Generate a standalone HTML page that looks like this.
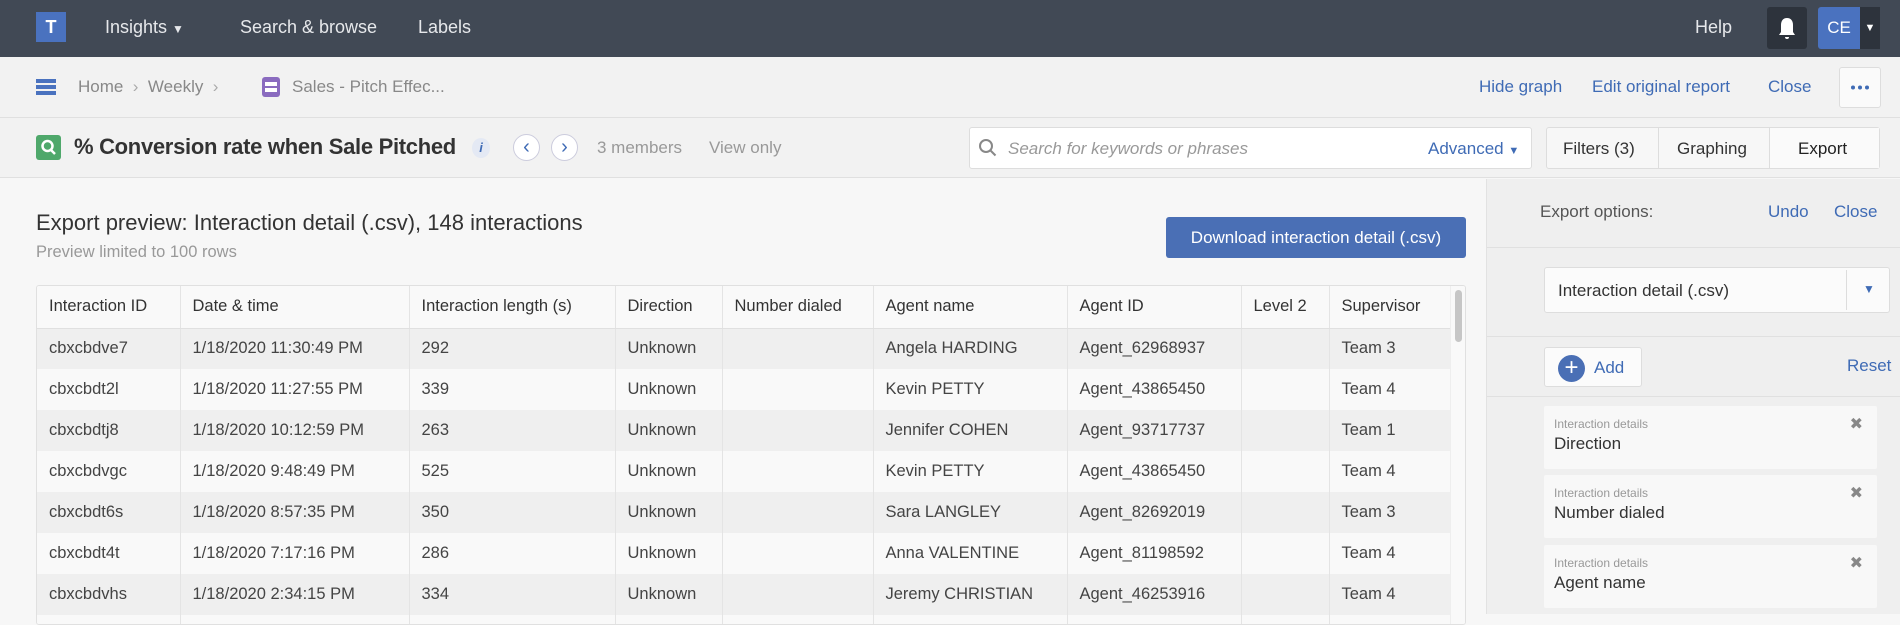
<!DOCTYPE html>
<html><head><meta charset="utf-8"><style>
*{box-sizing:border-box;margin:0;padding:0}
body{width:1900px;height:614px;overflow:hidden;background:#f7f7f7;font-family:"Liberation Sans",sans-serif;color:#333;position:relative}
.a{position:absolute}
.nav{left:0;top:0;width:1900px;height:57px;background:#414955}
.nav .t{color:#e6e8eb;font-size:18px;top:17px}
.blue{color:#3f6bb5}
.bc{top:57px;left:0;width:1900px;height:61px;background:#f2f2f2;border-bottom:1px solid #e0e0e0}
.tb{top:118px;left:0;width:1900px;height:60px;background:#f2f2f2;border-bottom:1px solid #e0e0e0}
table{border-collapse:collapse;font-size:16.5px;color:#444}
td,th{height:41px;padding:0 12px;text-align:left;border-right:1px solid #e4e4e4;white-space:nowrap}
th{font-weight:normal;color:#333;background:#f9f9f9;height:42px;border-bottom:1px solid #e0e0e0}
tr:nth-child(even) td{background:#efefef}
tr:nth-child(odd) td{background:#f9f9f9}
.card{left:1544px;width:333px;height:63px;background:#f8f8f8;border-radius:2px}
.card .s{position:absolute;left:10px;top:11px;font-size:12px;color:#999}
.card .m{position:absolute;left:10px;top:28px;font-size:17px;color:#333}
.card .x{position:absolute;right:14px;top:8px;font-size:16px;color:#888}
</style></head><body>
<div class="a nav">
 <div class="a" style="left:36px;top:12px;width:30px;height:30px;background:#4a72bf;color:#fff;font-weight:bold;font-size:18px;text-align:center;line-height:30px">T</div>
 <div class="a t" style="left:105px">Insights <span style="font-size:12px">▼</span></div>
 <div class="a t" style="left:240px">Search &amp; browse</div>
 <div class="a t" style="left:418px">Labels</div>
 <div class="a t" style="left:1695px">Help</div>
 <div class="a" style="left:1767px;top:7px;width:40px;height:42px;background:#2d333c;border-radius:3px"><svg width="40" height="42"><path d="M20 11c-4 0-6 3-6 7v7l-2 3h16l-2-3v-7c0-4-2-7-6-7zM18 30h4a2 2 0 0 1-4 0z" fill="#fff"/></svg></div>
 <div class="a" style="left:1818px;top:7px;width:42px;height:42px;background:#4a72bf;color:#fff;font-size:17px;text-align:center;line-height:42px;border-radius:3px 0 0 3px">CE</div>
 <div class="a" style="left:1860px;top:7px;width:20px;height:42px;background:#2d333c;color:#fff;font-size:11px;text-align:center;line-height:42px">▼</div>
</div>
<div class="a bc">
 <div class="a" style="left:36px;top:22px;width:20px;height:16px;border-top:4px solid #4a72bf;border-bottom:4px solid #4a72bf"><div style="margin-top:2px;height:4px;background:#4a72bf"></div></div>
 <div class="a" style="left:78px;top:20px;font-size:17px;color:#888">Home &nbsp;<span style="color:#aaa">›</span>&nbsp; Weekly &nbsp;<span style="color:#aaa">›</span></div>
 <div class="a" style="left:262px;top:20px;width:18px;height:20px;background:#8a6bbf;border-radius:3px"><div style="margin:5px 3px 0;height:4px;background:#fff"></div><div style="margin:2px 3px 0;height:4px;background:#fff;border-left:5px solid #fff"></div></div>
 <div class="a" style="left:292px;top:20px;font-size:17px;color:#888">Sales - Pitch Effec...</div>
 <div class="a blue" style="left:1479px;top:20px;font-size:17px">Hide graph</div>
 <div class="a blue" style="left:1592px;top:20px;font-size:17px">Edit original report</div>
 <div class="a blue" style="left:1768px;top:20px;font-size:17px">Close</div>
 <div class="a" style="left:1839px;top:10px;width:42px;height:41px;border:1px solid #ddd;background:#fafafa;border-radius:3px">
  <svg width="40" height="39"><circle cx="13" cy="19.5" r="2" fill="#3f6bb5"/><circle cx="20" cy="19.5" r="2" fill="#3f6bb5"/><circle cx="27" cy="19.5" r="2" fill="#3f6bb5"/></svg></div>
</div>
<div class="a tb">
 <div class="a" style="left:36px;top:17px;width:25px;height:25px;background:#4fa86b;border-radius:3px"><svg width="25" height="25"><circle cx="11.5" cy="11" r="5" fill="none" stroke="#fff" stroke-width="2.5"/><path d="M15 15l4 4" stroke="#fff" stroke-width="2.5"/></svg></div>
 <div class="a" style="left:74px;top:16px;font-size:22px;font-weight:bold;color:#333;letter-spacing:-0.3px">% Conversion rate when Sale Pitched</div>
 <div class="a" style="left:472px;top:20px;width:18px;height:20px;border-radius:50%;background:#e4e9f4;color:#3f6bb5;font-style:italic;font-weight:bold;font-size:13px;text-align:center;line-height:20px">i</div>
 <div class="a" style="left:513px;top:16px;width:27px;height:27px;border:1px solid #ccd;border-radius:50%;background:#fff;color:#3f6bb5;text-align:center;line-height:24px;font-size:20px">‹</div>
 <div class="a" style="left:551px;top:16px;width:27px;height:27px;border:1px solid #ccd;border-radius:50%;background:#fff;color:#3f6bb5;text-align:center;line-height:24px;font-size:20px">›</div>
 <div class="a" style="left:597px;top:20px;font-size:17px;color:#999">3 members</div>
 <div class="a" style="left:709px;top:20px;font-size:17px;color:#999">View only</div>
 <div class="a" style="left:969px;top:9px;width:563px;height:42px;background:#fff;border:1px solid #ddd;border-radius:3px">
  <svg class="a" style="left:8px;top:10px" width="20" height="20"><circle cx="8" cy="8" r="6" fill="none" stroke="#888" stroke-width="2"/><path d="M12.5 12.5l5 5" stroke="#888" stroke-width="2"/></svg>
  <div class="a" style="left:38px;top:11px;font-size:17px;color:#999;font-style:italic">Search for keywords or phrases</div>
  <div class="a blue" style="left:458px;top:11px;font-size:17px">Advanced <span style="font-size:11px">▼</span></div>
 </div>
 <div class="a" style="left:1546px;top:9px;width:334px;height:42px;background:#f7f7f7;border:1px solid #ddd;border-radius:3px;font-size:17px">
  <div class="a" style="left:16px;top:11px">Filters (3)</div>
  <div class="a" style="left:111px;top:0;width:1px;height:40px;background:#ddd"></div>
  <div class="a" style="left:130px;top:11px">Graphing</div>
  <div class="a" style="left:222px;top:0;width:110px;height:40px;background:#fafafa;border-left:1px solid #ddd"></div>
  <div class="a" style="left:251px;top:11px;color:#222">Export</div>
 </div>
</div>
<div class="a" style="left:1486px;top:179px;width:414px;height:435px;background:#efefef;border-left:1px solid #e2e2e2"></div>
<div class="a" style="left:36px;top:210px;font-size:22px;color:#333">Export preview: Interaction detail (.csv), 148 interactions</div>
<div class="a" style="left:36px;top:243px;font-size:16.5px;color:#999">Preview limited to 100 rows</div>
<div class="a" style="left:1166px;top:217px;width:300px;height:41px;background:#4a6fb5;color:#fff;border-radius:3px;font-size:17px;text-align:center;line-height:41px">Download interaction detail (.csv)</div>
<div class="a" style="left:36px;top:285px;width:1430px;height:340px;border:1px solid #e0e0e0;border-radius:3px;overflow:hidden;background:#f9f9f9">
<table>
<colgroup><col style="width:143px"><col style="width:229px"><col style="width:206px"><col style="width:107px"><col style="width:151px"><col style="width:194px"><col style="width:174px"><col style="width:88px"><col style="width:121px"></colgroup>
<tr><th>Interaction ID</th><th>Date &amp; time</th><th>Interaction length (s)</th><th>Direction</th><th>Number dialed</th><th>Agent name</th><th>Agent ID</th><th>Level 2</th><th>Supervisor</th></tr>
<tr><td>cbxcbdve7</td><td>1/18/2020 11:30:49 PM</td><td>292</td><td>Unknown</td><td></td><td>Angela HARDING</td><td>Agent_62968937</td><td></td><td>Team 3</td></tr>
<tr><td>cbxcbdt2l</td><td>1/18/2020 11:27:55 PM</td><td>339</td><td>Unknown</td><td></td><td>Kevin PETTY</td><td>Agent_43865450</td><td></td><td>Team 4</td></tr>
<tr><td>cbxcbdtj8</td><td>1/18/2020 10:12:59 PM</td><td>263</td><td>Unknown</td><td></td><td>Jennifer COHEN</td><td>Agent_93717737</td><td></td><td>Team 1</td></tr>
<tr><td>cbxcbdvgc</td><td>1/18/2020 9:48:49 PM</td><td>525</td><td>Unknown</td><td></td><td>Kevin PETTY</td><td>Agent_43865450</td><td></td><td>Team 4</td></tr>
<tr><td>cbxcbdt6s</td><td>1/18/2020 8:57:35 PM</td><td>350</td><td>Unknown</td><td></td><td>Sara LANGLEY</td><td>Agent_82692019</td><td></td><td>Team 3</td></tr>
<tr><td>cbxcbdt4t</td><td>1/18/2020 7:17:16 PM</td><td>286</td><td>Unknown</td><td></td><td>Anna VALENTINE</td><td>Agent_81198592</td><td></td><td>Team 4</td></tr>
<tr><td>cbxcbdvhs</td><td>1/18/2020 2:34:15 PM</td><td>334</td><td>Unknown</td><td></td><td>Jeremy CHRISTIAN</td><td>Agent_46253916</td><td></td><td>Team 4</td></tr>
<tr><td>cbxcbdx1a</td><td>1/18/2020 1:12:05 PM</td><td>301</td><td>Unknown</td><td></td><td>Kevin PETTY</td><td>Agent_43865450</td><td></td><td>Team 4</td></tr>
</table>
<div class="a" style="left:1413px;top:0;width:16px;height:340px;background:#f9f9f9;border-left:1px solid #eee"></div>
<div class="a" style="left:1418px;top:4px;width:7px;height:52px;background:#c6c6c6;border-radius:4px"></div>
</div>
<div class="a" style="left:1540px;top:202px;font-size:17px;color:#555">Export options:</div>
<div class="a blue" style="left:1768px;top:202px;font-size:17px">Undo</div>
<div class="a blue" style="left:1834px;top:202px;font-size:17px">Close</div>
<div class="a" style="left:1487px;top:247px;width:413px;height:1px;background:#e0e0e0"></div>
<div class="a" style="left:1544px;top:267px;width:346px;height:46px;background:#fbfbfb;border:1px solid #ddd;border-radius:3px">
 <div class="a" style="left:13px;top:13px;font-size:17px;color:#333">Interaction detail (.csv)</div>
 <div class="a" style="left:301px;top:2px;width:1px;height:40px;background:#ddd"></div>
 <div class="a blue" style="left:318px;top:14px;font-size:12px">▼</div>
</div>
<div class="a" style="left:1487px;top:336px;width:413px;height:1px;background:#e0e0e0"></div>
<div class="a" style="left:1544px;top:347px;width:98px;height:40px;background:#fbfbfb;border:1px solid #ddd;border-radius:3px">
 <div class="a" style="left:13px;top:7px;width:27px;height:27px;border-radius:50%;background:#4a6fb5;color:#fff;text-align:center;line-height:26px;font-size:24px">+</div>
 <div class="a blue" style="left:49px;top:10px;font-size:17px">Add</div>
</div>
<div class="a blue" style="left:1847px;top:356px;font-size:17px">Reset</div>
<div class="a" style="left:1487px;top:396px;width:413px;height:1px;background:#e0e0e0"></div>
<div class="a card" style="top:406px"><div class="s">Interaction details</div><div class="m">Direction</div><div class="x">✖</div></div>
<div class="a card" style="top:475px"><div class="s">Interaction details</div><div class="m">Number dialed</div><div class="x">✖</div></div>
<div class="a card" style="top:545px"><div class="s">Interaction details</div><div class="m">Agent name</div><div class="x">✖</div></div>
</body></html>
